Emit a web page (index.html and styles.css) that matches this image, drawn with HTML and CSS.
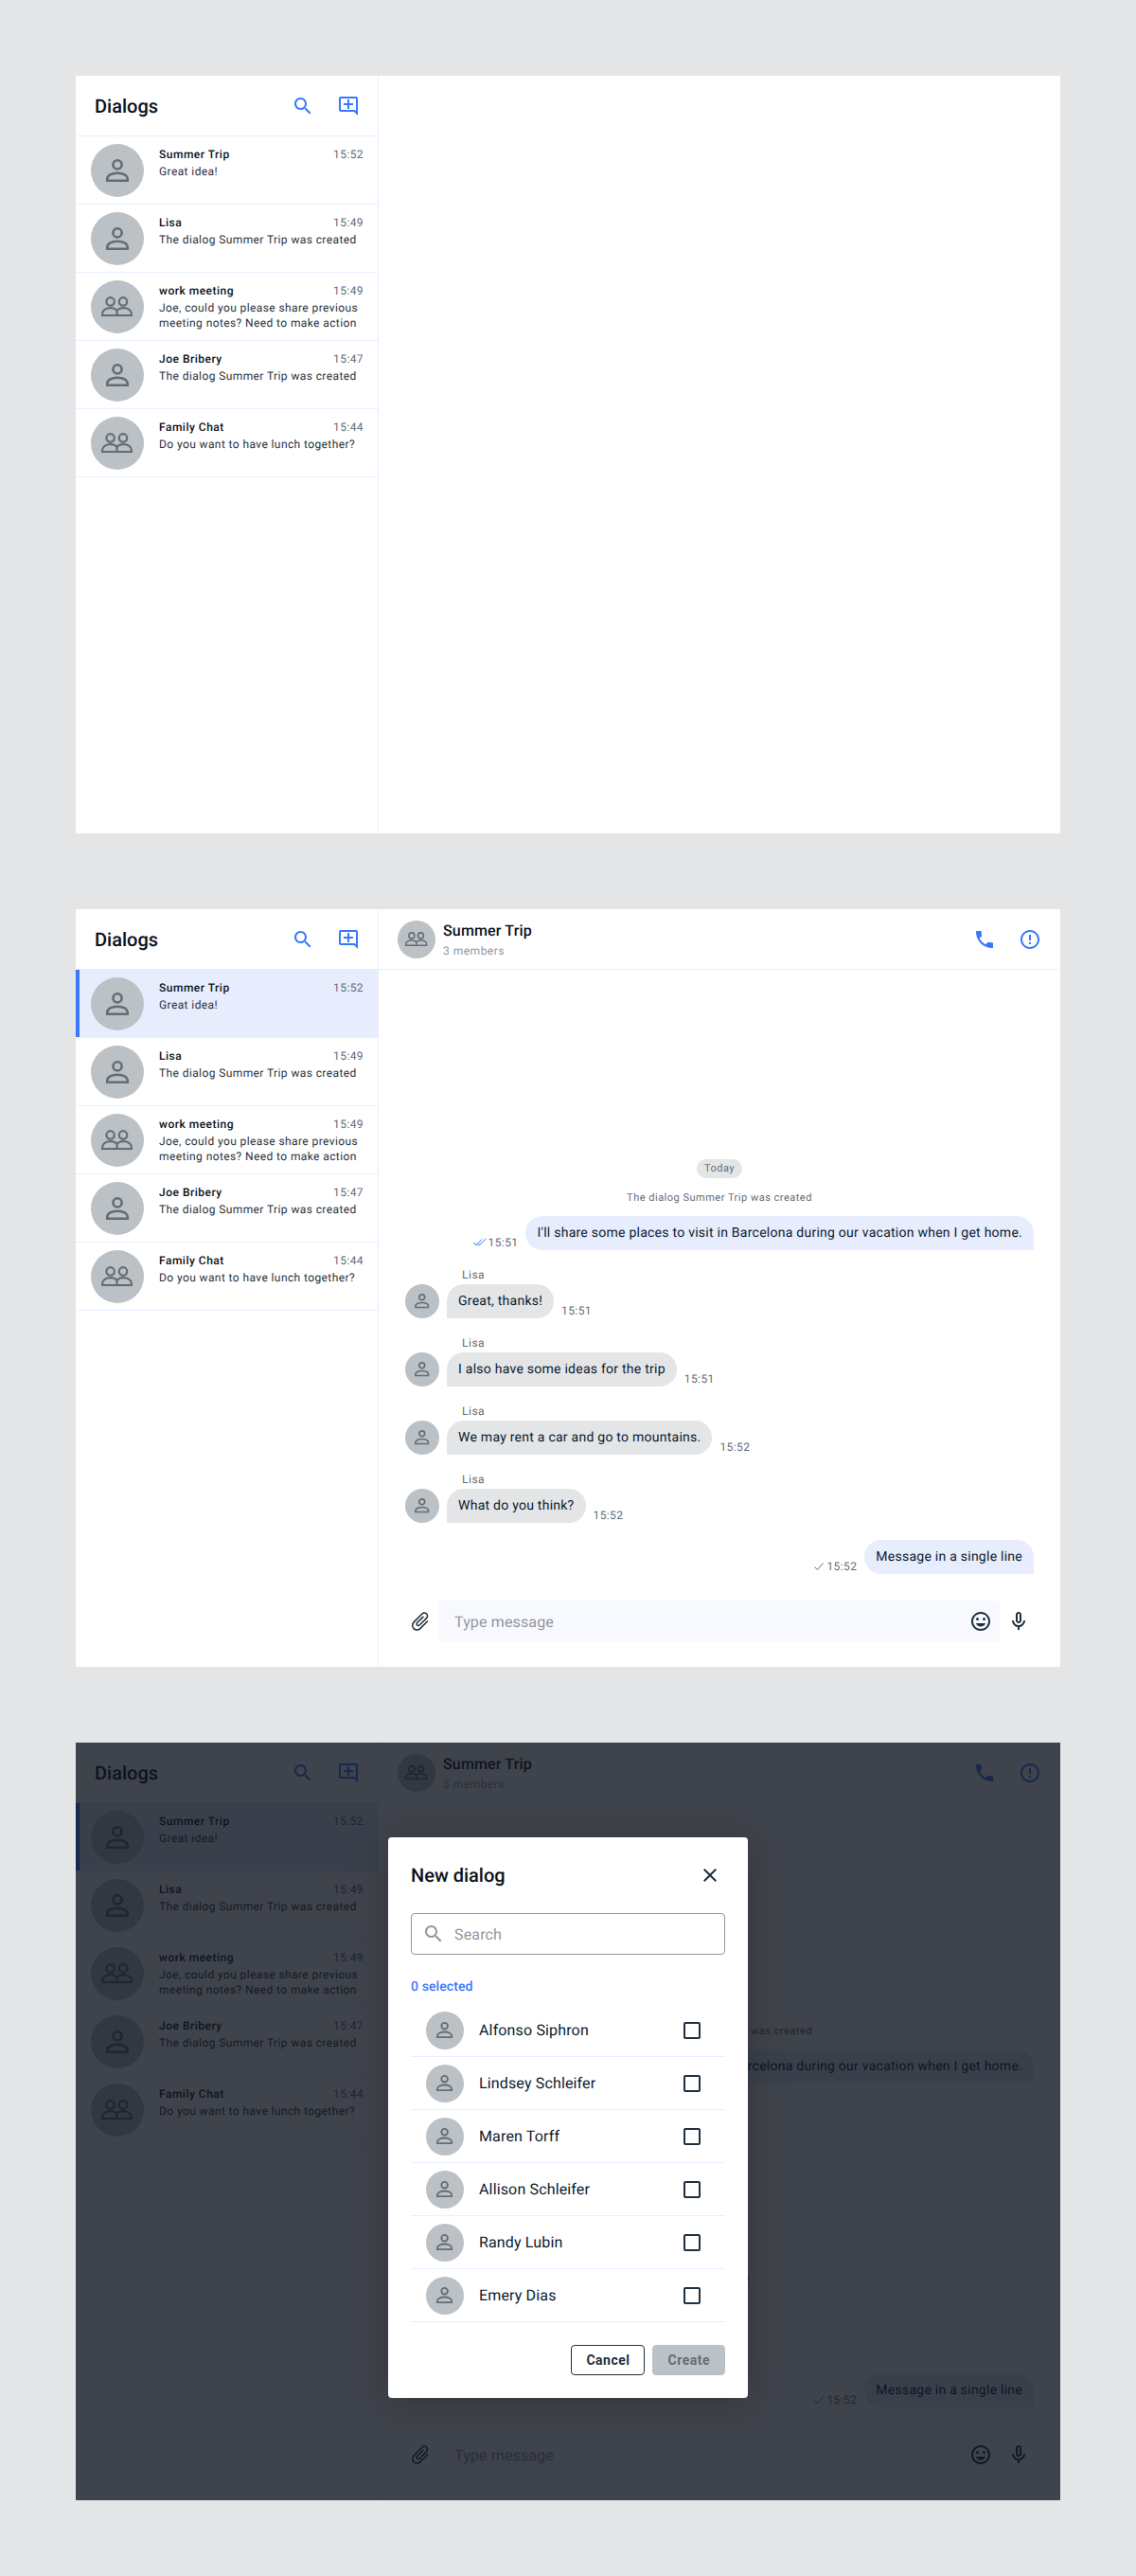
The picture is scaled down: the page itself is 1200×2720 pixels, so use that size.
FILE: index.html
```html
<!DOCTYPE html>
<html lang="en">
  <head>
    <meta charset="UTF-8" />
    <title>Dialogs</title>
    <link rel="stylesheet" href="styles.css">
  </head>
  <body>
    <svg class="sprite">
      <symbol id="i-user" viewBox="0 0 24 24">
        <circle cx="12" cy="5.9" r="4.6" fill="none" stroke="currentColor" stroke-width="2.6" />
        <path d="M1.300 22.700v-1.700c0-3.800 4.700-6.300 10.700-6.300s10.700 2.500 10.700 6.300v1.700z" fill="none" stroke="currentColor" stroke-width="2.600" />
      </symbol>
      <symbol id="i-group" viewBox="0 0 33 21">
        <circle cx="9.600" cy="5.300" r="4.200" fill="none" stroke="currentColor" stroke-width="2.200" />
        <circle cx="23" cy="5.300" r="4.200" fill="none" stroke="currentColor" stroke-width="2.200" />
        <path d="M1.100 19.900v-1.900c0-3.500 4-6 8.500-6 3.200 0 5.700 1 6.900 3 1.200-2 3.700-3 6.900-3 4.500 0 8.500 2.500 8.500 6v1.900zM16.500 15v5" fill="none" stroke="currentColor" stroke-width="2.200" />
      </symbol>
      <symbol id="i-search" viewBox="0 0 24 24">
        <path d="M15.5 14h-.79l-.28-.27C15.41 12.59 16 11.11 16 9.5 16 5.91 13.09 3 9.5 3S3 5.91 3 9.5 5.91 16 9.5 16c1.61 0 3.09-.59 4.23-1.57l.27.28v.79l5 4.99L20.49 19l-4.99-5zm-6 0C7.01 14 5 11.99 5 9.5S7.01 5 9.5 5 14 7.01 14 9.5 11.99 14 9.5 14z" fill="currentColor" />
      </symbol>
      <symbol id="i-add" viewBox="0 0 24 24">
        <path d="M22 4c0-1.1-.9-2-2-2H4c-1.1 0-2 .9-2 2v12c0 1.1.9 2 2 2h14l4 4V4zm-2 13.17L18.83 16H4V4h16v13.17zM13 5h-2v4H7v2h4v4h2v-4h4V9h-4z" fill="currentColor" />
      </symbol>
      <symbol id="i-call" viewBox="0 0 24 24">
        <path d="M21 15.46l-5.27-.61-2.52 2.52c-2.83-1.44-5.15-3.75-6.59-6.59l2.53-2.53L8.54 3H3.03C2.45 13.18 10.82 21.55 21 20.97v-5.51z" fill="currentColor" />
      </symbol>
      <symbol id="i-info" viewBox="0 0 24 24">
        <path d="M11 15h2v2h-2zm0-8h2v6h-2zm.99-5C6.47 2 2 6.48 2 12s4.47 10 9.99 10C17.52 22 22 17.52 22 12S17.52 2 11.99 2zM12 20c-4.42 0-8-3.58-8-8s3.58-8 8-8 8 3.58 8 8-3.58 8-8 8z" fill="currentColor" />
      </symbol>
      <symbol id="i-attach" viewBox="0 0 24 24">
        <path transform="rotate(45 12 12)" d="M16.5 6v11.5c0 2.21-1.79 4-4 4s-4-1.79-4-4V5c0-1.38 1.12-2.5 2.5-2.5s2.5 1.12 2.5 2.5v10.5c0 .55-.45 1-1 1s-1-.45-1-1V6H10v9.5c0 1.38 1.12 2.5 2.5 2.5s2.5-1.12 2.5-2.5V5c0-2.21-1.79-4-4-4S7 2.79 7 5v12.5c0 3.04 2.46 5.5 5.5 5.5s5.5-2.46 5.5-5.5V6h-1.5z" fill="currentColor" />
      </symbol>
      <symbol id="i-emoji" viewBox="0 0 24 24">
        <path d="M11.99 2C6.47 2 2 6.47 2 12s4.47 10 9.99 10S22 17.53 22 12 17.52 2 11.99 2zM12 20c-4.42 0-8-3.58-8-8s3.58-8 8-8 8 3.58 8 8-3.58 8-8 8z" fill="currentColor" />
        <circle cx="15.5" cy="9.5" r="1.5" fill="currentColor" />
        <circle cx="8.5" cy="9.5" r="1.5" fill="currentColor" />
        <path d="M12 17.5c2.33 0 4.3-1.46 5.11-3.5H6.89c.81 2.04 2.78 3.5 5.11 3.5z" fill="currentColor" />
      </symbol>
      <symbol id="i-mic" viewBox="0 0 24 24">
        <path d="M12 14c1.66 0 3-1.34 3-3V5c0-1.66-1.34-3-3-3S9 3.34 9 5v6c0 1.66 1.34 3 3 3zm-1-9c0-.55.45-1 1-1s1 .45 1 1v6c0 .55-.45 1-1 1s-1-.45-1-1V5zm6 6c0 2.76-2.24 5-5 5s-5-2.24-5-5H5c0 3.53 2.61 6.43 6 6.92V21h2v-3.08c3.39-.49 6-3.39 6-6.92h-2z" fill="currentColor" />
      </symbol>
      <symbol id="i-close" viewBox="0 0 24 24">
        <path d="M19 6.41 17.59 5 12 10.59 6.41 5 5 6.41 10.59 12 5 17.59 6.41 19 12 13.41 17.59 19 19 17.59 13.41 12z" fill="currentColor" />
      </symbol>
      <symbol id="i-check" viewBox="0 0 12 10">
        <path d="M1.500 5.500l3 3 6-7" fill="none" stroke="currentColor" stroke-width="1" />
      </symbol>
      <symbol id="i-read" viewBox="0 0 14 10">
        <path d="M.5 5l2.500 3 6-6.500M3.500 5.500l2.500 2.500 7.500-7" fill="none" stroke="currentColor" stroke-width="1" />
      </symbol>
    </svg>

    <!-- empty state -->
    <section class="frame">
      <aside class="sidebar">
        <header class="sidebar-head">
          <h2 class="sidebar-title">Dialogs</h2>
          <svg class="icon icon-blue"><use href="#i-search"></use></svg>
          <svg class="icon icon-blue"><use href="#i-add"></use></svg>
        </header>
        <ul class="dialogs">
          <li class="dialog">
            <span class="avatar"><svg class="avatar-user"><use href="#i-user"></use></svg></span>
            <div class="dialog-body">
              <div class="dialog-top"><span class="dialog-name">Summer Trip</span><span class="dialog-time">15:52</span></div>
              <p class="dialog-text">Great idea!</p>
            </div>
          </li>
          <li class="dialog">
            <span class="avatar"><svg class="avatar-user"><use href="#i-user"></use></svg></span>
            <div class="dialog-body">
              <div class="dialog-top"><span class="dialog-name">Lisa</span><span class="dialog-time">15:49</span></div>
              <p class="dialog-text">The dialog Summer Trip was created</p>
            </div>
          </li>
          <li class="dialog">
            <span class="avatar"><svg class="avatar-group"><use href="#i-group"></use></svg></span>
            <div class="dialog-body">
              <div class="dialog-top"><span class="dialog-name">work meeting</span><span class="dialog-time">15:49</span></div>
              <p class="dialog-text">Joe, could you please share previous meeting notes? Need to make action</p>
            </div>
          </li>
          <li class="dialog">
            <span class="avatar"><svg class="avatar-user"><use href="#i-user"></use></svg></span>
            <div class="dialog-body">
              <div class="dialog-top"><span class="dialog-name">Joe Bribery</span><span class="dialog-time">15:47</span></div>
              <p class="dialog-text">The dialog Summer Trip was created</p>
            </div>
          </li>
          <li class="dialog">
            <span class="avatar"><svg class="avatar-group"><use href="#i-group"></use></svg></span>
            <div class="dialog-body">
              <div class="dialog-top"><span class="dialog-name">Family Chat</span><span class="dialog-time">15:44</span></div>
              <p class="dialog-text">Do you want to have lunch together?</p>
            </div>
          </li>
        </ul>
      </aside>
      <main class="chat"></main>
    </section>

    <!-- open chat -->
    <section class="frame">
      <aside class="sidebar">
        <header class="sidebar-head">
          <h2 class="sidebar-title">Dialogs</h2>
          <svg class="icon icon-blue"><use href="#i-search"></use></svg>
          <svg class="icon icon-blue"><use href="#i-add"></use></svg>
        </header>
        <ul class="dialogs">
          <li class="dialog dialog-active">
            <span class="avatar"><svg class="avatar-user"><use href="#i-user"></use></svg></span>
            <div class="dialog-body">
              <div class="dialog-top"><span class="dialog-name">Summer Trip</span><span class="dialog-time">15:52</span></div>
              <p class="dialog-text">Great idea!</p>
            </div>
          </li>
          <li class="dialog">
            <span class="avatar"><svg class="avatar-user"><use href="#i-user"></use></svg></span>
            <div class="dialog-body">
              <div class="dialog-top"><span class="dialog-name">Lisa</span><span class="dialog-time">15:49</span></div>
              <p class="dialog-text">The dialog Summer Trip was created</p>
            </div>
          </li>
          <li class="dialog">
            <span class="avatar"><svg class="avatar-group"><use href="#i-group"></use></svg></span>
            <div class="dialog-body">
              <div class="dialog-top"><span class="dialog-name">work meeting</span><span class="dialog-time">15:49</span></div>
              <p class="dialog-text">Joe, could you please share previous meeting notes? Need to make action</p>
            </div>
          </li>
          <li class="dialog">
            <span class="avatar"><svg class="avatar-user"><use href="#i-user"></use></svg></span>
            <div class="dialog-body">
              <div class="dialog-top"><span class="dialog-name">Joe Bribery</span><span class="dialog-time">15:47</span></div>
              <p class="dialog-text">The dialog Summer Trip was created</p>
            </div>
          </li>
          <li class="dialog">
            <span class="avatar"><svg class="avatar-group"><use href="#i-group"></use></svg></span>
            <div class="dialog-body">
              <div class="dialog-top"><span class="dialog-name">Family Chat</span><span class="dialog-time">15:44</span></div>
              <p class="dialog-text">Do you want to have lunch together?</p>
            </div>
          </li>
        </ul>
      </aside>
      <main class="chat">
        <header class="chat-head">
          <span class="avatar avatar-md"><svg class="avatar-group"><use href="#i-group"></use></svg></span>
          <div class="chat-info">
            <div class="chat-name">Summer Trip</div>
            <div class="chat-members">3 members</div>
          </div>
          <svg class="icon icon-blue"><use href="#i-call"></use></svg>
          <svg class="icon icon-blue"><use href="#i-info"></use></svg>
        </header>
        <div class="messages">
          <span class="day">Today</span>
          <p class="system">The dialog Summer Trip was created</p>
          <div class="msg-out">
            <svg class="tick tick-read"><use href="#i-read"></use></svg>
            <span class="msg-time">15:51</span>
            <div class="bubble bubble-out">I'll share some places to visit in Barcelona during our vacation when I get home.</div>
          </div>
          <div class="msg-in">
            <div class="msg-sender">Lisa</div>
            <div class="msg-row">
              <span class="avatar avatar-sm"><svg class="avatar-user"><use href="#i-user"></use></svg></span>
              <div class="bubble bubble-in">Great, thanks!</div>
              <span class="msg-time">15:51</span>
            </div>
          </div>
          <div class="msg-in">
            <div class="msg-sender">Lisa</div>
            <div class="msg-row">
              <span class="avatar avatar-sm"><svg class="avatar-user"><use href="#i-user"></use></svg></span>
              <div class="bubble bubble-in">I also have some ideas for the trip</div>
              <span class="msg-time">15:51</span>
            </div>
          </div>
          <div class="msg-in">
            <div class="msg-sender">Lisa</div>
            <div class="msg-row">
              <span class="avatar avatar-sm"><svg class="avatar-user"><use href="#i-user"></use></svg></span>
              <div class="bubble bubble-in">We may rent a car and go to mountains.</div>
              <span class="msg-time">15:52</span>
            </div>
          </div>
          <div class="msg-in">
            <div class="msg-sender">Lisa</div>
            <div class="msg-row">
              <span class="avatar avatar-sm"><svg class="avatar-user"><use href="#i-user"></use></svg></span>
              <div class="bubble bubble-in">What do you think?</div>
              <span class="msg-time">15:52</span>
            </div>
          </div>
          <div class="msg-out">
            <svg class="tick"><use href="#i-check"></use></svg>
            <span class="msg-time">15:52</span>
            <div class="bubble bubble-out">Message in a single line</div>
          </div>
        </div>
        <footer class="composer">
          <svg class="icon icon-dark"><use href="#i-attach"></use></svg>
          <div class="composer-input">
            <span class="composer-hint">Type message</span>
            <svg class="icon icon-dark"><use href="#i-emoji"></use></svg>
          </div>
          <svg class="icon icon-dark"><use href="#i-mic"></use></svg>
        </footer>
      </main>
    </section>

    <!-- new dialog modal over open chat -->
    <section class="frame">
      <aside class="sidebar">
        <header class="sidebar-head">
          <h2 class="sidebar-title">Dialogs</h2>
          <svg class="icon icon-blue"><use href="#i-search"></use></svg>
          <svg class="icon icon-blue"><use href="#i-add"></use></svg>
        </header>
        <ul class="dialogs">
          <li class="dialog dialog-active">
            <span class="avatar"><svg class="avatar-user"><use href="#i-user"></use></svg></span>
            <div class="dialog-body">
              <div class="dialog-top"><span class="dialog-name">Summer Trip</span><span class="dialog-time">15:52</span></div>
              <p class="dialog-text">Great idea!</p>
            </div>
          </li>
          <li class="dialog">
            <span class="avatar"><svg class="avatar-user"><use href="#i-user"></use></svg></span>
            <div class="dialog-body">
              <div class="dialog-top"><span class="dialog-name">Lisa</span><span class="dialog-time">15:49</span></div>
              <p class="dialog-text">The dialog Summer Trip was created</p>
            </div>
          </li>
          <li class="dialog">
            <span class="avatar"><svg class="avatar-group"><use href="#i-group"></use></svg></span>
            <div class="dialog-body">
              <div class="dialog-top"><span class="dialog-name">work meeting</span><span class="dialog-time">15:49</span></div>
              <p class="dialog-text">Joe, could you please share previous meeting notes? Need to make action</p>
            </div>
          </li>
          <li class="dialog">
            <span class="avatar"><svg class="avatar-user"><use href="#i-user"></use></svg></span>
            <div class="dialog-body">
              <div class="dialog-top"><span class="dialog-name">Joe Bribery</span><span class="dialog-time">15:47</span></div>
              <p class="dialog-text">The dialog Summer Trip was created</p>
            </div>
          </li>
          <li class="dialog">
            <span class="avatar"><svg class="avatar-group"><use href="#i-group"></use></svg></span>
            <div class="dialog-body">
              <div class="dialog-top"><span class="dialog-name">Family Chat</span><span class="dialog-time">15:44</span></div>
              <p class="dialog-text">Do you want to have lunch together?</p>
            </div>
          </li>
        </ul>
      </aside>
      <main class="chat">
        <header class="chat-head">
          <span class="avatar avatar-md"><svg class="avatar-group"><use href="#i-group"></use></svg></span>
          <div class="chat-info">
            <div class="chat-name">Summer Trip</div>
            <div class="chat-members">3 members</div>
          </div>
          <svg class="icon icon-blue"><use href="#i-call"></use></svg>
          <svg class="icon icon-blue"><use href="#i-info"></use></svg>
        </header>
        <div class="messages">
          <span class="day">Today</span>
          <p class="system">The dialog Summer Trip was created</p>
          <div class="msg-out">
            <svg class="tick tick-read"><use href="#i-read"></use></svg>
            <span class="msg-time">15:51</span>
            <div class="bubble bubble-out">I'll share some places to visit in Barcelona during our vacation when I get home.</div>
          </div>
          <div class="msg-in">
            <div class="msg-sender">Lisa</div>
            <div class="msg-row">
              <span class="avatar avatar-sm"><svg class="avatar-user"><use href="#i-user"></use></svg></span>
              <div class="bubble bubble-in">Great, thanks!</div>
              <span class="msg-time">15:51</span>
            </div>
          </div>
          <div class="msg-in">
            <div class="msg-sender">Lisa</div>
            <div class="msg-row">
              <span class="avatar avatar-sm"><svg class="avatar-user"><use href="#i-user"></use></svg></span>
              <div class="bubble bubble-in">I also have some ideas for the trip</div>
              <span class="msg-time">15:51</span>
            </div>
          </div>
          <div class="msg-in">
            <div class="msg-sender">Lisa</div>
            <div class="msg-row">
              <span class="avatar avatar-sm"><svg class="avatar-user"><use href="#i-user"></use></svg></span>
              <div class="bubble bubble-in">We may rent a car and go to mountains.</div>
              <span class="msg-time">15:52</span>
            </div>
          </div>
          <div class="msg-in">
            <div class="msg-sender">Lisa</div>
            <div class="msg-row">
              <span class="avatar avatar-sm"><svg class="avatar-user"><use href="#i-user"></use></svg></span>
              <div class="bubble bubble-in">What do you think?</div>
              <span class="msg-time">15:52</span>
            </div>
          </div>
          <div class="msg-out">
            <svg class="tick"><use href="#i-check"></use></svg>
            <span class="msg-time">15:52</span>
            <div class="bubble bubble-out">Message in a single line</div>
          </div>
        </div>
        <footer class="composer">
          <svg class="icon icon-dark"><use href="#i-attach"></use></svg>
          <div class="composer-input">
            <span class="composer-hint">Type message</span>
            <svg class="icon icon-dark"><use href="#i-emoji"></use></svg>
          </div>
          <svg class="icon icon-dark"><use href="#i-mic"></use></svg>
        </footer>
      </main>

      <div class="overlay">
        <div class="modal">
          <div class="modal-head">
            <h3 class="modal-title">New dialog</h3>
            <svg class="icon icon-dark"><use href="#i-close"></use></svg>
          </div>
          <div class="search">
            <svg class="icon icon-gray"><use href="#i-search"></use></svg>
            <span class="search-hint">Search</span>
          </div>
          <div class="selected-count">0 selected</div>
          <ul class="users">
            <li class="user">
              <span class="avatar avatar-md"><svg class="avatar-user"><use href="#i-user"></use></svg></span>
              <span class="user-name">Alfonso Siphron</span>
              <span class="checkbox"></span>
            </li>
            <li class="user">
              <span class="avatar avatar-md"><svg class="avatar-user"><use href="#i-user"></use></svg></span>
              <span class="user-name">Lindsey Schleifer</span>
              <span class="checkbox"></span>
            </li>
            <li class="user">
              <span class="avatar avatar-md"><svg class="avatar-user"><use href="#i-user"></use></svg></span>
              <span class="user-name">Maren Torff</span>
              <span class="checkbox"></span>
            </li>
            <li class="user">
              <span class="avatar avatar-md"><svg class="avatar-user"><use href="#i-user"></use></svg></span>
              <span class="user-name">Allison Schleifer</span>
              <span class="checkbox"></span>
            </li>
            <li class="user">
              <span class="avatar avatar-md"><svg class="avatar-user"><use href="#i-user"></use></svg></span>
              <span class="user-name">Randy Lubin</span>
              <span class="checkbox"></span>
            </li>
            <li class="user">
              <span class="avatar avatar-md"><svg class="avatar-user"><use href="#i-user"></use></svg></span>
              <span class="user-name">Emery Dias</span>
              <span class="checkbox"></span>
            </li>
          </ul>
          <div class="modal-actions">
            <button class="btn btn-cancel">Cancel</button>
            <button class="btn btn-create">Create</button>
          </div>
        </div>
      </div>
    </section>
  </body>
</html>
```

FILE: styles.css
```css
* {
  box-sizing: border-box;
}
body {
  margin: 0;
  padding: 80px 0;
  display: flex;
  flex-direction: column;
  align-items: center;
  gap: 80px;
  background-color: #e4e5e7;
  font-family: Roboto, "Liberation Sans", sans-serif;
  text-rendering: geometricPrecision;
  color: #0b121b;
}
h2,
h3,
p,
ul {
  margin: 0;
  padding: 0;
}
ul {
  list-style: none;
}
.sprite {
  display: none;
}

.frame {
  position: relative;
  display: flex;
  width: 1040px;
  height: 800px;
  background-color: #fff;
  overflow: hidden;
  will-change: opacity;
}
.icon {
  flex: none;
  width: 24px;
  height: 24px;
}
.icon-blue {
  color: #3978fc;
}
.icon-dark {
  color: #202f3e;
}
.icon-gray {
  color: #90979f;
}

.avatar {
  flex: none;
  display: flex;
  align-items: center;
  justify-content: center;
  width: 56px;
  height: 56px;
  border-radius: 50%;
  background-color: #bcc1c5;
  color: #636d78;
}
.avatar-md {
  width: 40px;
  height: 40px;
}
.avatar-sm {
  width: 36px;
  height: 36px;
}
.avatar-user {
  width: 43%;
  height: 43%;
}
.avatar-group {
  width: 59%;
  height: 38%;
}

/* sidebar */
.sidebar {
  flex: none;
  width: 320px;
  border-right: 1px solid #e7efff;
}
.sidebar-head {
  display: flex;
  align-items: center;
  gap: 24px;
  height: 64px;
  padding: 0 19px 0 20px;
  border-bottom: 1px solid #e7efff;
}
.sidebar-title {
  flex: 1;
  font-size: 20px;
  line-height: 28px;
  font-weight: 500;
}
.dialog {
  display: flex;
  gap: 16px;
  height: 72px;
  padding: 8px 15px 7px 16px;
  border-bottom: 1px solid #e7efff;
}
.dialog-active {
  margin-right: -1px;
  padding-right: 16px;
  background-color: #e7edfd;
  box-shadow: inset 4px 0 0 #3978fc;
}
.dialog-body {
  flex: 1;
  min-width: 0;
  padding-top: 3px;
}
.dialog-top {
  display: flex;
  justify-content: space-between;
  margin-bottom: 2px;
  font-size: 12px;
  line-height: 16px;
}
.dialog-name {
  font-weight: 500;
  letter-spacing: 0.5px;
  color: #0b121b;
}
.dialog-time {
  letter-spacing: 0.4px;
  color: #636d78;
}
.dialog-text {
  font-size: 12px;
  line-height: 16px;
  letter-spacing: 0.4px;
  color: #2b3440;
}

/* chat */
.chat {
  flex: 1;
  display: flex;
  flex-direction: column;
  min-width: 0;
}
.chat-head {
  display: flex;
  align-items: center;
  gap: 24px;
  height: 64px;
  padding: 0 20px;
  border-bottom: 1px solid #e7efff;
}
.chat-info {
  flex: 1;
  margin-left: -16px;
  padding-top: 1px;
}
.chat-name {
  font-size: 16px;
  line-height: 20px;
  font-weight: 500;
  letter-spacing: 0.15px;
}
.chat-members {
  margin-top: 3px;
  font-size: 12px;
  line-height: 16px;
  letter-spacing: 0.5px;
  color: #90979f;
}
.messages {
  flex: 1;
  display: flex;
  flex-direction: column;
  justify-content: flex-end;
  min-height: 0;
}
.day {
  align-self: center;
  height: 20px;
  padding: 0 8px;
  border-radius: 10px;
  background-color: #e4e5e7;
  font-size: 11px;
  line-height: 20px;
  letter-spacing: 0.5px;
  color: #636d78;
}
.system {
  margin: 12px 0;
  text-align: center;
  font-size: 11px;
  line-height: 17px;
  height: 16px;
  letter-spacing: 0.5px;
  color: #636d78;
}
.bubble {
  padding: 8px 12px;
  font-size: 14px;
  line-height: 20px;
  letter-spacing: 0.25px;
  color: #0b1b2f;
}
.bubble-out {
  border-radius: 18px 18px 0 18px;
  background-color: #e7edfd;
}
.bubble-in {
  border-radius: 18px 18px 18px 0;
  background-color: #e4e5e7;
}
.msg-time {
  font-size: 12px;
  line-height: 16px;
  letter-spacing: 0.4px;
  color: #636d78;
}
.msg-out {
  display: flex;
  align-items: flex-end;
  justify-content: flex-end;
  padding-right: 28px;
}
.msg-out .msg-time {
  margin-right: 8px;
}
.tick {
  width: 12px;
  height: 10px;
  margin: 0 2px 3px 0;
  color: #636d78;
}
.tick-read {
  width: 14px;
  color: #3978fc;
}
.msg-in {
  margin-bottom: 18px;
  padding-left: 28px;
}
.msg-out + .msg-in {
  margin-top: 18px;
}
.msg-sender {
  margin-bottom: 2px;
  padding-left: 60px;
  font-size: 12px;
  line-height: 16px;
  letter-spacing: 0.5px;
  color: #636d78;
}
.msg-row {
  display: flex;
  align-items: flex-end;
  gap: 8px;
}
.composer {
  display: flex;
  align-items: center;
  gap: 8px;
  padding: 28px 32px 26px;
}
.composer-input {
  flex: 1;
  display: flex;
  align-items: center;
  height: 44px;
  padding: 0 8px 0 16px;
  border-radius: 4px;
  background-color: #f7f9ff;
}
.composer-hint {
  flex: 1;
  font-size: 16px;
  letter-spacing: 0.15px;
  color: #90979f;
}

/* new dialog modal */
.overlay {
  position: absolute;
  inset: 0;
  display: flex;
  justify-content: center;
  align-items: flex-start;
  padding-top: 100px;
  background-color: rgba(15, 20, 30, 0.8);
}
.modal {
  width: 380px;
  padding: 24px;
  border-radius: 4px;
  background-color: #fff;
  box-shadow: 0 4px 40px rgba(0, 0, 0, 0.2);
}
.modal-head {
  display: flex;
  align-items: center;
  justify-content: space-between;
  height: 32px;
  padding-right: 4px;
}
.modal-title {
  font-size: 20px;
  line-height: 28px;
  font-weight: 500;
}
.search {
  display: flex;
  align-items: center;
  gap: 10px;
  height: 44px;
  margin-top: 24px;
  padding-left: 11px;
  border: 1px solid #90979f;
  border-radius: 4px;
}
.search-hint {
  font-size: 16px;
  letter-spacing: 0.15px;
  color: #90979f;
}
.selected-count {
  margin: 24px 0 8px;
  font-size: 14px;
  line-height: 20px;
  font-weight: 500;
  letter-spacing: 0.1px;
  color: #3978fc;
}
.user {
  display: flex;
  align-items: center;
  gap: 16px;
  height: 56px;
  padding: 0 26px 0 16px;
  border-bottom: 1px solid #e7efff;
}
.user-name {
  flex: 1;
  font-size: 16px;
  letter-spacing: 0.15px;
  color: #0b1b2f;
}
.checkbox {
  flex: none;
  width: 18px;
  height: 18px;
  border: 2px solid #202f3e;
  border-radius: 2px;
}
.modal-actions {
  display: flex;
  justify-content: flex-end;
  gap: 8px;
  margin-top: 24px;
}
.btn {
  height: 32px;
  padding: 0 15px;
  border-radius: 4px;
  font-family: inherit;
  font-size: 14px;
  font-weight: 700;
  letter-spacing: 0.5px;
}
.btn-cancel {
  border: 1px solid #202f3e;
  background-color: #fff;
  color: #202f3e;
}
.btn-create {
  border: 1px solid #bcc1c5;
  background-color: #bcc1c5;
  color: #636d78;
}
```
